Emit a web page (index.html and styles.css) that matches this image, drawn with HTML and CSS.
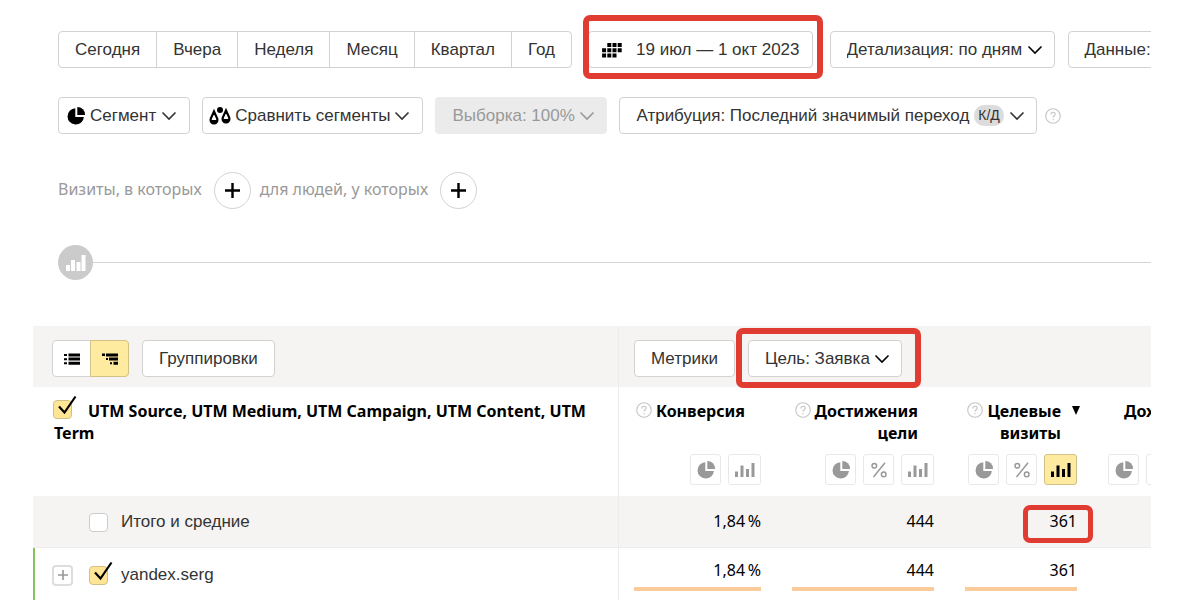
FILE: index.html
```html
<!DOCTYPE html>
<html lang="ru">
<head>
<meta charset="utf-8">
<meta name="viewport" content="width=device-width, initial-scale=1">
<title>UTM — отчёт</title>
<link rel="stylesheet" href="styles.css">
</head>
<body>
<svg class="sprite" aria-hidden="true">
  <symbol id="chevron" viewBox="0 0 16 10"><path d="M1.500 1.500 8 8l6.500-6.500" fill="none" stroke="currentColor" stroke-width="1.600"/></symbol>
  <symbol id="pie" viewBox="0 0 18 18"><path d="M8.300 1.200V10h8.600A8.200 8.200 0 1 1 8.300 1.200z" fill="currentColor"/><path d="M10.300 0a7.700 7.700 0 0 1 7.700 8h-7.700z" fill="currentColor"/></symbol>
  <symbol id="bars" viewBox="0 0 20 16"><path d="M0 9.500h3V15H0zM5.500 3.500h3V15h-3zM11 7h3v8h-3zM16.500 1h3v14h-3z" fill="currentColor"/></symbol>
  <symbol id="percent" viewBox="0 0 16 16"><path d="M14 .8 2.500 15" fill="none" stroke="currentColor" stroke-width="1.500"/><circle cx="3.300" cy="3.800" r="2.300" fill="none" stroke="currentColor" stroke-width="1.500"/><circle cx="12.700" cy="12.400" r="2.300" fill="none" stroke="currentColor" stroke-width="1.500"/></symbol>
  <symbol id="help" viewBox="0 0 16 16"><circle cx="8" cy="8" r="7.300" fill="none" stroke="currentColor" stroke-width="1.100"/><path d="M5.900 6.400c0-1.400.9-2.200 2.200-2.200s2.100.8 2.100 1.900c0 1.600-2.100 1.700-2.100 3.400M8.100 11v1.300" fill="none" stroke="currentColor" stroke-width="1.100"/></symbol>
  <symbol id="tick" viewBox="0 0 20 20"><path d="M2 11.500 7.500 17.500 18.500 1.500" fill="none" stroke="#000" stroke-width="2.200"/></symbol>
  <symbol id="plus" viewBox="0 0 16 16"><path d="M0 8h16M8 0v16" fill="none" stroke="currentColor" stroke-width="2.600"/></symbol>
</svg>
<main class="page">
  <section class="filters">
    <div class="row row-period">
      <div class="group">
        <button class="btn">Сегодня</button>
        <button class="btn">Вчера</button>
        <button class="btn">Неделя</button>
        <button class="btn">Месяц</button>
        <button class="btn">Квартал</button>
        <button class="btn">Год</button>
      </div>
      <div class="marked mark-date">
        <button class="btn btn-date">
          <svg width="20" height="16" viewBox="0 0 20 16" aria-hidden="true"><path d="M5.300 1h4v4h-4zM10.500 1h4v4h-4zM15.700 1h4v4h-4zM.1 6.200h4v4h-4zM5.300 6.200h4v4h-4zM10.500 6.200h4v4h-4zM15.700 6.200h4v4h-4zM.1 11.400h4v4h-4zM5.300 11.400h4v4h-4zM10.500 11.400h4v4h-4z"/></svg>
          19 июл — 1 окт 2023
        </button>
      </div>
      <div class="picker dark detail">
        <select class="btn" aria-label="Детализация"><option>Детализация: по дням</option></select>
        <svg class="chevron" aria-hidden="true"><use href="#chevron"/></svg>
      </div>
      <button class="btn">Данные:</button>
    </div>

    <div class="row row-segment">
      <button class="btn btn-icon" aria-haspopup="true"><svg width="18" height="18" aria-hidden="true"><use href="#pie"/></svg>Сегмент<svg class="chevron" aria-hidden="true"><use href="#chevron"/></svg></button>
      <button class="btn btn-icon btn-compare" aria-haspopup="true"><svg width="22" height="18" viewBox="0 0 22 18" aria-hidden="true"><circle cx="11" cy="3" r="3"/><path d="M5 4.500 8.100 11.300c1 3-1 5.200-3.100 5.200s-4.100-2.200-3.100-5.200zM17 3.500l3.100 6.800c1 3-1 5.200-3.100 5.200s-4.100-2.200-3.100-5.200z" fill="#fff" stroke="#000" stroke-width="2.200"/><path d="M1.500 13h7c0 5-7 5-7 0zM13.500 12h7c0 5-7 5-7 0z"/></svg>Сравнить сегменты<svg class="chevron" aria-hidden="true"><use href="#chevron"/></svg></button>
      <div class="picker sample">
        <select class="btn" aria-label="Выборка" disabled><option>Выборка: 100%</option></select>
        <svg class="chevron" aria-hidden="true"><use href="#chevron"/></svg>
      </div>
      <button class="btn btn-attribution" aria-haspopup="true">Атрибуция: Последний значимый переход<span class="badge">К/Д</span><svg class="chevron" aria-hidden="true"><use href="#chevron"/></svg></button>
      <svg class="help" role="img" aria-label="Справка"><use href="#help"/></svg>
    </div>

    <div class="row row-conditions">
      <span>Визиты, в которых</span>
      <button class="round" aria-label="Добавить условие для визитов"><svg width="15" height="15" aria-hidden="true"><use href="#plus"/></svg></button>
      <span>для людей, у которых</span>
      <button class="round" aria-label="Добавить условие для людей"><svg width="15" height="15" aria-hidden="true"><use href="#plus"/></svg></button>
    </div>

    <div class="chart-toggle">
      <button class="chart-button" aria-label="Показать график"><svg width="20" height="18" viewBox="0 0 20 18" aria-hidden="true"><path d="M0 11h4v6H0zM5 6h4v11H5zM10.500 8h4v9h-4zM15.500 1h4v16h-4z" fill="#fff"/></svg></button>
    </div>
  </section>

  <section class="report">
    <div class="toolbar">
      <div class="tools tools-left">
        <div class="group">
          <button class="btn view" aria-label="Список"><svg width="16" height="12" viewBox="0 0 16 12" aria-hidden="true"><path d="M0 1h3v2H0zM4.500 .5H16v3H4.500zM0 5.200h3v2H0zM4.500 4.600H16v3H4.500zM0 9.200h3v2H0zM4.500 8.700H16v3H4.500z"/></svg></button>
          <button class="btn view active" aria-label="Дерево"><svg width="16" height="12" viewBox="0 0 16 12" aria-hidden="true"><path d="M0 .5h3v2.500H0zM4 .5h12v3H4zM4 5h2v2H4zM7 4.600h9v3H7zM8 9.200h2v2H8zM11.500 8.700H16v3h-4.500z"/></svg></button>
        </div>
        <button class="btn">Группировки</button>
      </div>
      <div class="tools tools-right">
        <button class="btn">Метрики</button>
        <div class="marked mark-goal">
          <div class="picker dark">
            <select class="btn" aria-label="Цель"><option>Цель: Заявка</option></select>
            <svg class="chevron" aria-hidden="true"><use href="#chevron"/></svg>
          </div>
        </div>
      </div>
    </div>

    <table class="data">
      <colgroup><col class="col-name"><col class="col-conversion"><col class="col-reach"><col class="col-visits"><col class="col-income"></colgroup>
      <thead>
        <tr>
          <th class="name" scope="col"><label class="check"><input type="checkbox" checked aria-label="Выбрать все"><svg class="tick" aria-hidden="true"><use href="#tick"/></svg></label>UTM Source, UTM Medium, UTM Campaign, UTM Content, UTM Term</th>
          <th scope="col">
            <div class="heading"><svg class="help" aria-hidden="true"><use href="#help"/></svg><span>Конверсия</span></div>
            <div class="modes"><button class="mode" aria-label="Круговая диаграмма"><svg width="18" height="18"><use href="#pie"/></svg></button><button class="mode wide" aria-label="Столбцы"><svg width="20" height="16"><use href="#bars"/></svg></button></div>
          </th>
          <th scope="col">
            <div class="heading"><svg class="help" aria-hidden="true"><use href="#help"/></svg><span>Достижения<br>цели</span></div>
            <div class="modes"><button class="mode" aria-label="Круговая диаграмма"><svg width="18" height="18"><use href="#pie"/></svg></button><button class="mode" aria-label="Проценты"><svg width="16" height="16"><use href="#percent"/></svg></button><button class="mode wide" aria-label="Столбцы"><svg width="20" height="16"><use href="#bars"/></svg></button></div>
          </th>
          <th scope="col">
            <div class="heading sorted"><svg class="help" aria-hidden="true"><use href="#help"/></svg><span>Целевые<br>визиты</span><svg class="sort" viewBox="0 0 8 10" aria-hidden="true"><path d="M0 0h8L4 9z"/></svg></div>
            <div class="modes"><button class="mode" aria-label="Круговая диаграмма"><svg width="18" height="18"><use href="#pie"/></svg></button><button class="mode" aria-label="Проценты"><svg width="16" height="16"><use href="#percent"/></svg></button><button class="mode wide active" aria-label="Столбцы"><svg width="20" height="16"><use href="#bars"/></svg></button></div>
          </th>
          <th scope="col">
            <div class="heading income"><span>Доход</span></div>
            <div class="modes start"><button class="mode" aria-label="Круговая диаграмма"><svg width="18" height="18"><use href="#pie"/></svg></button><button class="mode" aria-label="Проценты"></button></div>
          </th>
        </tr>
      </thead>
      <tbody>
        <tr class="total">
          <td class="name"><label class="item"><span class="check"><input type="checkbox"></span>Итого и средние</label></td>
          <td>1,84&thinsp;%</td>
          <td>444</td>
          <td><span class="marked mark-value">361</span></td>
          <td></td>
        </tr>
        <tr class="source">
          <td class="name"><div class="entry"><button class="expand" aria-label="Развернуть"><svg width="10" height="10"><use href="#plus"/></svg></button><label class="item"><span class="check"><input type="checkbox" checked><svg class="tick" aria-hidden="true"><use href="#tick"/></svg></span>yandex.serg</label></div></td>
          <td><div class="value">1,84&thinsp;%</div></td>
          <td><div class="value">444</div></td>
          <td><div class="value">361</div></td>
          <td></td>
        </tr>
      </tbody>
    </table>
  </section>
</main>
</body>
</html>
```
FILE: styles.css
```css
* { box-sizing: border-box; }

body {
  margin: 0;
  background: #fff;
  color: #222;
  font: 16px/22px "Noto Sans", sans-serif;
}

.sprite { position: absolute; width: 0; height: 0; }

.page {
  margin: 0 49px 0 33px;
  padding-bottom: 12px;
}

svg { flex: none; fill: currentColor; }

.chevron { width: 16px; height: 10px; }

.help { width: 16px; height: 16px; color: #c4c4c4; }

/* Filters */
.filters { padding-left: 25px; }

.row { display: flex; align-items: center; }

.btn {
  display: flex;
  flex: none;
  align-items: center;
  height: 37px;
  margin: 0;
  padding: 0 16px;
  border: 1px solid #d2d2d2;
  border-radius: 4px;
  background: #fff;
  color: #333;
  font: 17px/22px "Liberation Sans", Arial, sans-serif;
  white-space: nowrap;
}

.group { display: flex; flex: none; }
.group .btn { border-radius: 0; }
.group .btn + .btn { margin-left: -1px; }
.group .btn:first-child { border-radius: 4px 0 0 4px; }
.group .btn:last-child { border-radius: 0 4px 4px 0; }

.row-period { gap: 13px; overflow: hidden; padding: 31px 0 29px; }
.row-period .group { margin-right: 3px; }
.btn-date { gap: 14px; padding: 0 12px 0 13px; }
.btn-date svg { color: #000; }
.detail { margin-left: 4px; }

.picker { position: relative; flex: none; color: #333; }
.picker.dark { color: #000; }
.picker select { appearance: none; padding-right: 31px; opacity: 1; }
.picker .chevron { position: absolute; top: 14px; right: 12px; pointer-events: none; }
.sample { color: #999; }
.sample select:disabled { border-color: #ebebeb; background: #ebebeb; color: #999; }

.row-segment { gap: 12px; }
.btn-icon { gap: 5px; padding: 0 12px 0 8px; }
.btn-icon svg:first-child { color: #000; }
.btn-compare { gap: 4px; padding-left: 6px; }
.btn-attribution { gap: 5px; padding-right: 11px; }
.badge {
  padding: 0 4px;
  border-radius: 10px;
  background: #dcdcdc;
  font-size: 14px;
  line-height: 21px;
}
.row-segment .help { margin-left: -4px; }

.row-conditions { padding-top: 38px; color: #999; }
.row-conditions span { padding-bottom: 4px; }
.round {
  display: grid;
  place-items: center;
  width: 37px;
  height: 37px;
  margin: 0 9px 0 12px;
  padding: 0;
  border: 1px solid #d2d2d2;
  border-radius: 50%;
  background: #fff;
  color: #000;
}

.chart-toggle { display: flex; align-items: center; padding: 36px 0 46px; }
.chart-toggle::after { content: ""; flex: 1; height: 1px; background: #d4d4d4; }
.chart-button {
  display: grid;
  place-items: center;
  width: 35px;
  height: 35px;
  padding: 0;
  border: 0;
  border-radius: 50%;
  background: #cbcbcb;
}

/* Red frames round the highlighted controls */
.marked { position: relative; flex: none; }
.marked::after {
  content: "";
  position: absolute;
  border: 6px solid #e03c32;
  border-radius: 7px;
  pointer-events: none;
}
.mark-date::after { inset: -16px -10px -11px -5px; }
.mark-goal::after { inset: -12px -19px -11px -12px; }
.mark-value::after { inset: -5px -16px -11px -27px; border-width: 5px; }

/* Report */
.report { overflow: hidden; }

.toolbar { display: grid; grid-template-columns: 585px 1fr; background: #f5f4f2; }
.tools { display: flex; gap: 13px; padding: 14px 0 10px; }
.tools-left { padding-left: 19px; }
.tools-right { padding-left: 15px; border-left: 1px solid #ececec; }
.view { justify-content: center; width: 39px; padding: 0; color: #000; }
.active { border-color: #d1c187; background: #ffeba0; }

.data {
  width: 1210px;
  border-collapse: separate;
  border-spacing: 0;
  table-layout: fixed;
  color: #000;
}
.col-name { width: 585px; }
.col-conversion { width: 159px; }
.col-reach { width: 173px; }
.col-visits { width: 143px; }
.col-income { width: 150px; }

.data th, .data td { padding: 0 16px 0 15px; text-align: right; vertical-align: top; }
.data th { height: 109px; padding-top: 13px; font-size: 16px; font-weight: 700; }
.data th:nth-child(2), .data td:nth-child(2) { border-left: 1px solid #ececec; }
.data .name { text-align: left; }
.data th.name { padding-left: 21px; }

.heading { display: flex; justify-content: flex-end; gap: 4px; height: 44px; padding-right: 16px; }
.heading .help { margin-top: 2px; }
.sorted { padding-right: 0; }
.sort { width: 8px; height: 10px; margin: 6px -3px 0 7px; }
.income { justify-content: flex-start; padding-left: 16px; }

.modes { display: flex; justify-content: flex-end; gap: 7px; padding-top: 10px; }
.start { justify-content: flex-start; }
.mode {
  display: grid;
  flex: none;
  place-items: center;
  width: 31px;
  height: 31px;
  padding: 0;
  border: 1px solid #e8e8e8;
  border-radius: 3px;
  background: #fff;
  color: #999;
}
.wide { width: 33px; }
.mode.active { border-color: #d1c187; background: #ffeba0; color: #000; }

.total { height: 52px; background: #f5f4f2; }
.data .total td { padding-top: 14px; border-bottom: 1px solid #ececec; }
.data .total .name { padding-top: 15px; }
.source { height: 52px; }
.data .source td { padding-top: 11px; }
.source .name { border-left: 2px solid #86c45a; }
.value { padding-bottom: 6px; border-bottom: 4px solid #fbcb9b; }

.check { position: relative; display: inline-block; width: 19px; height: 19px; }
.check input {
  display: block;
  width: 19px;
  height: 19px;
  margin: 0;
  appearance: none;
  border: 1px solid #ccc;
  border-radius: 4px;
  background: #fff;
}
.check input:checked { border-color: #d1c187; background: #ffe595; }
.tick { position: absolute; top: -5px; left: 4px; width: 20px; height: 20px; }
th .check { height: 16px; margin: 0 16px 6px -1px; vertical-align: bottom; }

.item { display: flex; align-items: center; gap: 13px; color: #333; font: 17px/22px "Liberation Sans", Arial, sans-serif; }
.total .item { padding-left: 41px; }
.entry { display: flex; align-items: center; gap: 16px; padding: 5px 0 0 2px; }
.expand {
  display: grid;
  place-items: center;
  width: 21px;
  height: 21px;
  padding: 0;
  border: 2px solid #ddd;
  border-radius: 4px;
  background: #fff;
  color: #999;
}
```
